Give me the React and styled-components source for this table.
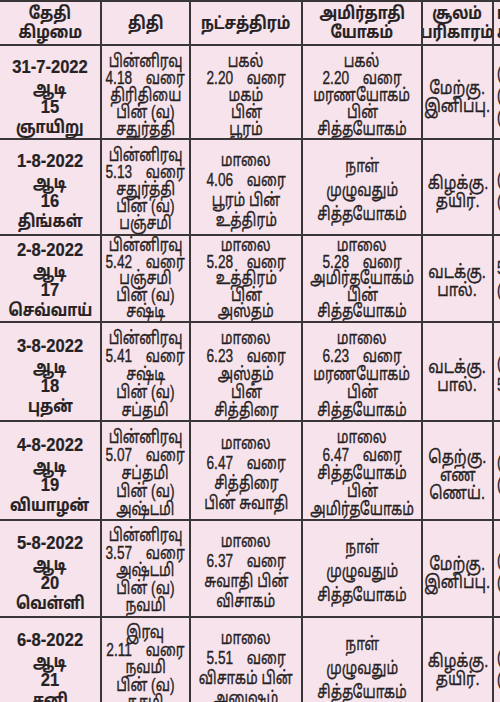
import React from 'react'
import styled, { createGlobalStyle } from 'styled-components'

const Global = createGlobalStyle`
  html, body {
    margin: 0;
    padding: 0;
    background: #f6e3eb;
    overflow: hidden;
  }
  body {
    font-family: "Liberation Sans", "Noto Sans Tamil", "Lohit Tamil", "Noto Sans", sans-serif;
    color: #262224;
  }
`

const Sheet = styled.div`
  width: 500px;
  height: 702px;
  overflow: hidden;
  background: #f6e3eb;
`

const Table = styled.table`
  border-collapse: collapse;
  table-layout: fixed;
  width: 580px;
  margin-left: -2px;
`

const Col = styled.col`
  width: ${p => p.$w}px;
`

const Head = styled.th`
  border: 2px solid #3a3537;
  font-weight: bold;
  height: 42px;
  padding: 0;
  vertical-align: middle;
  overflow: hidden;
`

const Cell = styled.td`
  border: 2px solid #3a3537;
  padding: ${p => p.$pad}px 0 0 0;
  height: ${p => p.$h - p.$pad}px;
  vertical-align: middle;
  overflow: hidden;
`

const Line = styled.div`
  display: flex;
  justify-content: ${p => (p.$left ? 'flex-start' : 'center')};
  padding-left: ${p => (p.$left ? '3px' : '0')};
  white-space: nowrap;
  font-weight: ${p => (p.$bold ? 'bold' : 'normal')};
  font-size: ${p => p.$size || 18}px;
  line-height: ${p => p.$lh || 18}px;
  -webkit-text-stroke: ${p => (p.$bold ? '0.2px' : '0.35px')} currentColor;
`

const Text = styled.span`
  display: inline-block;
  transform: scaleX(${p => p.$sx || 0.76});
  transform-origin: ${p => (p.$left ? 'left center' : 'center')};
  word-spacing: ${p => (p.$wide ? '13px' : 'normal')};
`

const rows = [
  {
    h: 92, pad: 6, date: '31-7-2022', num: '15', day: 'ஞாயிறு',
    thithi: ['பின்னிரவு', '4.18 வரை', 'திரிதியை', 'பின் (வ)', 'சதுர்த்தி'],
    star: ['பகல்', '2.20 வரை', 'மகம்', 'பின்', 'பூரம்'],
    yog: ['பகல்', '2.20 வரை', 'மரணயோகம்', 'பின்', 'சித்தயோகம்'],
    lh: 17,
    soolam: ['மேற்கு.', 'இனிப்பு.'],
    extra: ['(', '(', '(']
  },
  {
    h: 94, pad: 5, date: '1-8-2022', num: '16', day: 'திங்கள்',
    thithi: ['பின்னிரவு', '5.13 வரை', 'சதுர்த்தி', 'பின் (வ)', 'பஞ்சமி'],
    star: ['மாலை', '4.06 வரை', 'பூரம் பின்', 'உத்திரம்'],
    starLh: 20,
    yog: ['நாள்', 'முழுவதும்', 'சித்தயோகம்'],
    yogLh: 24,
    lh: 17,
    soolam: ['கிழக்கு.', 'தயிர்.'],
    extra: ['(', '(']
  },
  {
    h: 85, pad: 0, date: '2-8-2022', num: '17', day: 'செவ்வாய்',
    thithi: ['பின்னிரவு', '5.42 வரை', 'பஞ்சமி', 'பின் (வ)', 'சஷ்டி'],
    star: ['மாலை', '5.28 வரை', 'உத்திரம்', 'பின்', 'அஸ்தம்'],
    yog: ['மாலை', '5.28 வரை', 'அமிர்தயோகம்', 'பின்', 'சித்தயோகம்'],
    lh: 16.5,
    soolam: ['வடக்கு.', 'பால்.'],
    extra: ['5', '(']
  },
  {
    h: 97, pad: 5, date: '3-8-2022', num: '18', day: 'புதன்',
    thithi: ['பின்னிரவு', '5.41 வரை', 'சஷ்டி', 'பின் (வ)', 'சப்தமி'],
    star: ['மாலை', '6.23 வரை', 'அஸ்தம்', 'பின்', 'சித்திரை'],
    yog: ['மாலை', '6.23 வரை', 'மரணயோகம்', 'பின்', 'சித்தயோகம்'],
    lh: 18,
    soolam: ['வடக்கு.', 'பால்.'],
    extra: ['(', '5']
  },
  {
    h: 97, pad: 5, date: '4-8-2022', num: '19', day: 'வியாழன்',
    thithi: ['பின்னிரவு', '5.07 வரை', 'சப்தமி', 'பின் (வ)', 'அஷ்டமி'],
    star: ['மாலை', '6.47 வரை', 'சித்திரை', 'பின் சுவாதி'],
    starLh: 20,
    yog: ['மாலை', '6.47 வரை', 'சித்தயோகம்', 'பின்', 'அமிர்தயோகம்'],
    lh: 18,
    soolam: ['தெற்கு.', 'எண்', 'ணெய்.'],
    extra: ['(', '(']
  },
  {
    h: 95, pad: 5, date: '5-8-2022', num: '20', day: 'வெள்ளி',
    thithi: ['பின்னிரவு', '3.57 வரை', 'அஷ்டமி', 'பின் (வ)', 'நவமி'],
    star: ['மாலை', '6.37 வரை', 'சுவாதி பின்', 'விசாகம்'],
    starLh: 20,
    yog: ['நாள்', 'முழுவதும்', 'சித்தயோகம்'],
    yogLh: 24,
    lh: 17.5,
    soolam: ['மேற்கு.', 'இனிப்பு.'],
    extra: ['(', '(']
  },
  {
    h: 95, pad: 5, date: '6-8-2022', num: '21', day: 'சனி',
    thithi: ['இரவு', '2.11 வரை', 'நவமி', 'பின் (வ)', 'தசமி'],
    star: ['மாலை', '5.51 வரை', 'விசாகம் பின்', 'அனுஷம்'],
    starLh: 20,
    yog: ['நாள்', 'முழுவதும்', 'சித்தயோகம்'],
    yogLh: 24,
    lh: 17.5,
    soolam: ['கிழக்கு.', 'தயிர்.'],
    extra: ['(', '(']
  }
]

const Lines = ({ items, lh, size, bold, left, sx }) =>
  items.map((t, i) => (
    <Line key={i} $lh={lh} $size={size} $bold={bold} $left={left}>
      <Text $wide={t.includes('வரை')} $left={left} $sx={sx}>{t}</Text>
    </Line>
  ))

const headers = [
  ['தேதி', 'கிழமை'],
  ['திதி'],
  ['நட்சத்திரம்'],
  ['அமிர்தாதி', 'யோகம்'],
  ['சூலம்', 'பரிகாரம்'],
  ['ராகு', 'காலம்']
]

export default function App() {
  return (
    <Sheet>
      <Global />
      <Table>
        <colgroup>
          <Col $w={102} />
          <Col $w={89} />
          <Col $w={112} />
          <Col $w={120} />
          <Col $w={71} />
          <Col $w={86} />
        </colgroup>
        <thead>
          <tr>
            {headers.map((h, i) => (
              <Head key={i}>
                <Lines items={h} lh={19} size={17} bold left={i === 5} sx={0.85} />
              </Head>
            ))}
          </tr>
        </thead>
        <tbody>
          {rows.map(r => (
            <tr key={r.date}>
              <Cell $h={r.h} $pad={r.pad + 3}>
                <Line $bold $size={18} $lh={23}><Text $sx={0.92}>{r.date}</Text></Line>
                <Line $bold $size={17} $lh={19}><Text $sx={0.85}>ஆடி</Text></Line>
                <Line $bold $size={18} $lh={19}><Text $sx={0.92}>{r.num}</Text></Line>
                <Line $bold $size={17} $lh={21}><Text $sx={0.85}>{r.day}</Text></Line>
              </Cell>
              <Cell $h={r.h} $pad={r.pad}>
                <Lines items={r.thithi} lh={r.lh} />
              </Cell>
              <Cell $h={r.h} $pad={r.pad}>
                <Lines items={r.star} lh={r.starLh || r.lh} />
              </Cell>
              <Cell $h={r.h} $pad={r.pad}>
                <Lines items={r.yog} lh={r.yogLh || r.lh} />
              </Cell>
              <Cell $h={r.h} $pad={r.pad + 4}>
                <Lines items={r.soolam} lh={18} sx={0.82} />
              </Cell>
              <Cell $h={r.h} $pad={r.pad}>
                <Lines items={r.extra} lh={22} left />
              </Cell>
            </tr>
          ))}
        </tbody>
      </Table>
    </Sheet>
  )
}
